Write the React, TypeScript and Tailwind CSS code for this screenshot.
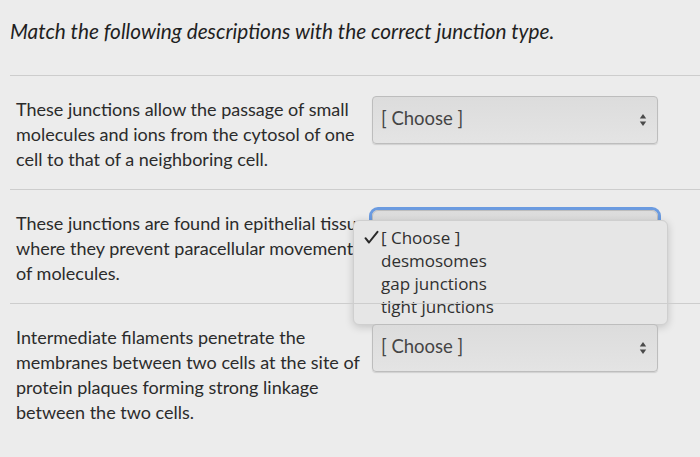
import React from 'react';

const lato = { fontFamily: 'Lato, "Open Sans", sans-serif' };

function Arrows() {
  return (
    <svg width="8" height="14" viewBox="0 0 8 14" className="shrink-0">
      <path d="M4 1 L7.2 5.6 H0.8 Z" fill="#4a4a4a" />
      <path d="M4 13 L7.2 8.4 H0.8 Z" fill="#4a4a4a" />
    </svg>
  );
}

function Select({ focused = false }: { focused?: boolean }) {
  return (
    <div
      className={
        'flex h-[48px] w-[286px] items-center justify-between rounded-[4px] border border-[#bdbdbd] bg-gradient-to-b from-[#dcdcdc] to-[#e4e4e4] pl-[8px] pr-[10px] shadow-[0_1px_1px_rgba(0,0,0,0.12)] ' +
        (focused ? 'ring-[3px] ring-[#6b9be0] rounded-[6px]' : '')
      }
    >
      <span className="-mt-[2px] text-[18.5px] text-[#454545]" style={lato}>
        [ Choose ]
      </span>
      <Arrows />
    </div>
  );
}

function Row({ lines, focused, children }: { lines: string[]; focused?: boolean; children?: React.ReactNode }) {
  return (
    <div className="relative flex border-t border-[#cdcdcd] pt-[21px] pb-[17px]">
      <div className="w-[362px] shrink-0 overflow-hidden pl-[6px] text-[18px] leading-[25px] text-[#2b2b2b]" style={lato}>
        {lines.map((l, i) => (
          <div key={i} className="whitespace-nowrap">
            {l}
          </div>
        ))}
      </div>
      <div className="-mt-[1px]">
        <Select focused={focused} />
      </div>
      {children}
    </div>
  );
}

export default function App() {
  return (
    <div className="h-[457px] w-[700px] overflow-hidden bg-[#ececec] pl-[10px]">
      <div className="h-[75px] pt-[15px]">
        <h1 className="text-[20.8px] italic text-[#1f1f1f]" style={lato}>
          Match the following descriptions with the correct junction type.
        </h1>
      </div>
      <Row
        lines={[
          'These junctions allow the passage of small',
          'molecules and ions from the cytosol of one',
          'cell to that of a neighboring cell.',
        ]}
      />
      <Row
        focused
        lines={[
          'These junctions are found in epithelial tissue',
          'where they prevent paracellular movement',
          'of molecules.',
        ]}
      >
        {/* open dropdown menu */}
        <div
          className="absolute left-[343px] top-[30px] w-[315px] rounded-[6px] border border-[#cfcfcf] bg-[#e6e6e6] pt-[5px] pb-[6px] shadow-[0_2px_8px_rgba(0,0,0,0.18)]"
          style={{ fontFamily: '"Open Sans", "DejaVu Sans", sans-serif' }}
        >
          {['[ Choose ]', 'desmosomes', 'gap junctions', 'tight junctions'].map((item, i) => (
            <div key={item} className="flex h-[23px] items-center text-[17px] text-[#303030]">
              <span className="flex w-[27px] justify-end pr-[2px]">
                {i === 0 && (
                  <svg width="15" height="15" viewBox="0 0 15 15">
                    <path d="M1.5 8.2 L5 12.5 L13.5 1.8" stroke="#2a2a2a" strokeWidth="2" fill="none" strokeLinecap="round" strokeLinejoin="round" />
                  </svg>
                )}
              </span>
              <span>{item}</span>
            </div>
          ))}
        </div>
      </Row>
      <Row
        lines={[
          'Intermediate filaments penetrate the',
          'membranes between two cells at the site of',
          'protein plaques forming strong linkage',
          'between the two cells.',
        ]}
      />
    </div>
  );
}
